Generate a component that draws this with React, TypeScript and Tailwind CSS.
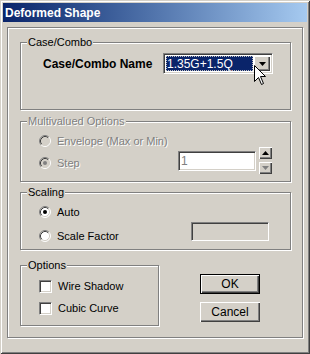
import React from "react";

const font = "font-['Liberation_Sans',Arial,sans-serif]";
const dim = "text-[#808080] [text-shadow:1px_1px_0_#fff]";

function Radio({ checked, disabled }: { checked?: boolean; disabled?: boolean }) {
  return (
    <svg width="12" height="12" viewBox="0 0 12 12" className="shrink-0">
      <circle cx="6" cy="6" r="5" fill={disabled ? "#d4d0c8" : "#fff"} />
      <path d="M2.11 9.89A5.5 5.5 0 0 1 9.89 2.11" stroke="#808080" fill="none" />
      <path d="M9.89 2.11A5.5 5.5 0 0 1 2.11 9.89" stroke="#fff" fill="none" />
      <path d="M2.82 9.18A4.5 4.5 0 0 1 9.18 2.82" stroke="#404040" fill="none" />
      <path d="M9.18 2.82A4.5 4.5 0 0 1 2.82 9.18" stroke="#d4d0c8" fill="none" />
      {checked && <circle cx="6" cy="6" r="2" fill={disabled ? "#808080" : "#000"} />}
    </svg>
  );
}

function Check() {
  return (
    <div className="h-[13px] w-[13px] shrink-0 border border-t-[#808080] border-l-[#808080] border-b-white border-r-white bg-white shadow-[inset_1px_1px_0_#404040,inset_-1px_-1px_0_#d4d0c8]" />
  );
}

function Group({
  label,
  disabled,
  className,
  children,
}: {
  label: string;
  disabled?: boolean;
  className: string;
  children: React.ReactNode;
}) {
  return (
    <div className={`relative border border-[#808080] shadow-[inset_1px_1px_0_#fff,1px_1px_0_#fff] ${className}`}>
      <span
        className={`absolute left-[6px] top-[-8px] bg-[#d4d0c8] px-[1px] text-[11px] leading-[14px] ${
          disabled ? dim : "text-black"
        }`}
      >
        {label}
      </span>
      {children}
    </div>
  );
}

function Button({ label, isDefault }: { label: string; isDefault?: boolean }) {
  return (
    <div className={`h-[20px] w-[60px] ${isDefault ? "border border-black" : ""}`}>
      <div className="flex h-full w-full items-center justify-center bg-[#d4d0c8] text-[12px] text-black shadow-[inset_1px_1px_0_#fff,inset_-1px_-1px_0_#404040,inset_-2px_-2px_0_#808080]">
        {label}
      </div>
    </div>
  );
}

function SpinButton({ up }: { up?: boolean }) {
  return (
    <div className="flex h-[12px] w-[13px] items-center justify-center bg-[#d4d0c8] shadow-[inset_1px_1px_0_#fff,inset_-1px_-1px_0_#404040,inset_-2px_-2px_0_#808080]">
      <svg width="7" height="4" viewBox="0 0 7 4">
        {up ? <path d="M3.5 0L7 4H0Z" fill="#000" /> : <path d="M0 0H7L3.5 4Z" fill="#808080" />}
      </svg>
    </div>
  );
}

export default function App() {
  return (
    <div
      className={`h-[354px] w-[310px] bg-[#d4d0c8] p-[3px] shadow-[inset_1px_1px_0_#d4d0c8,inset_-1px_-1px_0_#404040,inset_2px_2px_0_#fff,inset_-2px_-2px_0_#808080] ${font}`}
    >
      <div className="flex h-[19px] items-center bg-gradient-to-r from-[#0a246a] to-[#a6caf0] pl-[2px] text-[12px] font-bold text-white">
        Deformed Shape
      </div>

      <div className="ml-[4px] mt-[5px] h-[311px] w-[296px] border border-[#808080] pl-[12px] pt-[14px] shadow-[inset_1px_1px_0_#fff,1px_1px_0_#fff]">
        <Group label="Case/Combo" className="h-[68px] w-[271px]">
          <div className="flex items-center pl-[22px] pt-[10px]">
            <span className="w-[120px] text-[12px] font-bold text-black">Case/Combo Name</span>
            <div className="relative flex h-[21px] w-[110px] items-center border border-t-[#808080] border-l-[#808080] border-b-white border-r-white bg-white p-[2px] shadow-[inset_1px_1px_0_#404040,inset_-1px_-1px_0_#d4d0c8]">
              <div className="flex h-full flex-1 items-center bg-[#0a246a] pl-[1px] text-[12px] text-white outline outline-1 outline-dotted outline-offset-[-1px] outline-[#c0c0c0]">
                1.35G+1.5Q
              </div>
              <div className="ml-[1px] flex h-full w-[16px] items-center justify-center bg-[#d4d0c8] shadow-[inset_1px_1px_0_#fff,inset_-1px_-1px_0_#404040,inset_-2px_-2px_0_#808080]">
                <svg width="7" height="4" viewBox="0 0 7 4">
                  <path d="M0 0H7L3.5 4Z" fill="#000" />
                </svg>
              </div>
              <svg className="absolute left-[90px] top-[11px]" width="12" height="20" viewBox="0 0 12 20">
                <path d="M0.5 0.5V16.5L4.5 12.5L7.5 19.5L9.5 18.5L6.5 11.5H11.5Z" fill="#fff" stroke="#000" />
              </svg>
            </div>
          </div>
        </Group>

        <Group label="Multivalued Options" disabled className="mt-[11px] h-[61px] w-[271px]">
          <div className="flex">
            <div className="flex flex-col gap-[6px] pl-[18px] pt-[11px]">
              <div className="flex h-[16px] items-center gap-[6px]">
                <Radio disabled />
                <span className={`text-[11px] ${dim}`}>Envelope (Max or Min)</span>
              </div>
              <div className="flex h-[16px] items-center gap-[6px]">
                <Radio disabled checked />
                <span className={`text-[11px] ${dim}`}>Step</span>
              </div>
            </div>
            <div className="ml-auto flex gap-[3px] pr-[18px] pt-[25px]">
              <div className="mt-[4px] flex h-[20px] w-[78px] items-center border border-t-[#808080] border-l-[#808080] border-b-white border-r-white bg-white pl-[2px] text-[12px] text-[#808080] shadow-[inset_1px_1px_0_#404040,inset_-1px_-1px_0_#d4d0c8]">
                1
              </div>
              <div className="flex flex-col gap-[3px]">
                <SpinButton up />
                <SpinButton />
              </div>
            </div>
          </div>
        </Group>

        <Group label="Scaling" className="mt-[10px] h-[58px] w-[271px]">
          <div className="flex">
            <div className="flex flex-col gap-[8px] pl-[18px] pt-[11px]">
              <div className="flex h-[16px] items-center gap-[6px]">
                <Radio checked />
                <span className="text-[11px] text-black">Auto</span>
              </div>
              <div className="flex h-[16px] items-center gap-[6px]">
                <Radio />
                <span className="text-[11px] text-black">Scale Factor</span>
              </div>
            </div>
            <div className="ml-auto pr-[21px] pt-[29px]">
              <div className="h-[19px] w-[78px] border border-t-[#808080] border-l-[#808080] border-b-white border-r-white bg-[#d4d0c8] shadow-[inset_1px_1px_0_#404040,inset_-1px_-1px_0_#d4d0c8]" />
            </div>
          </div>
        </Group>

        <div className="mt-[15px] flex">
          <Group label="Options" className="h-[61px] w-[139px]">
            <div className="flex flex-col gap-[6px] pl-[18px] pt-[12px]">
              <div className="flex h-[16px] items-center gap-[6px]">
                <Check />
                <span className="text-[11px] text-black">Wire Shadow</span>
              </div>
              <div className="flex h-[16px] items-center gap-[6px]">
                <Check />
                <span className="text-[11px] text-black">Cubic Curve</span>
              </div>
            </div>
          </Group>
          <div className="ml-[41px] mt-[9px] flex flex-col gap-[8px]">
            <Button label="OK" isDefault />
            <Button label="Cancel" />
          </div>
        </div>
      </div>
    </div>
  );
}
